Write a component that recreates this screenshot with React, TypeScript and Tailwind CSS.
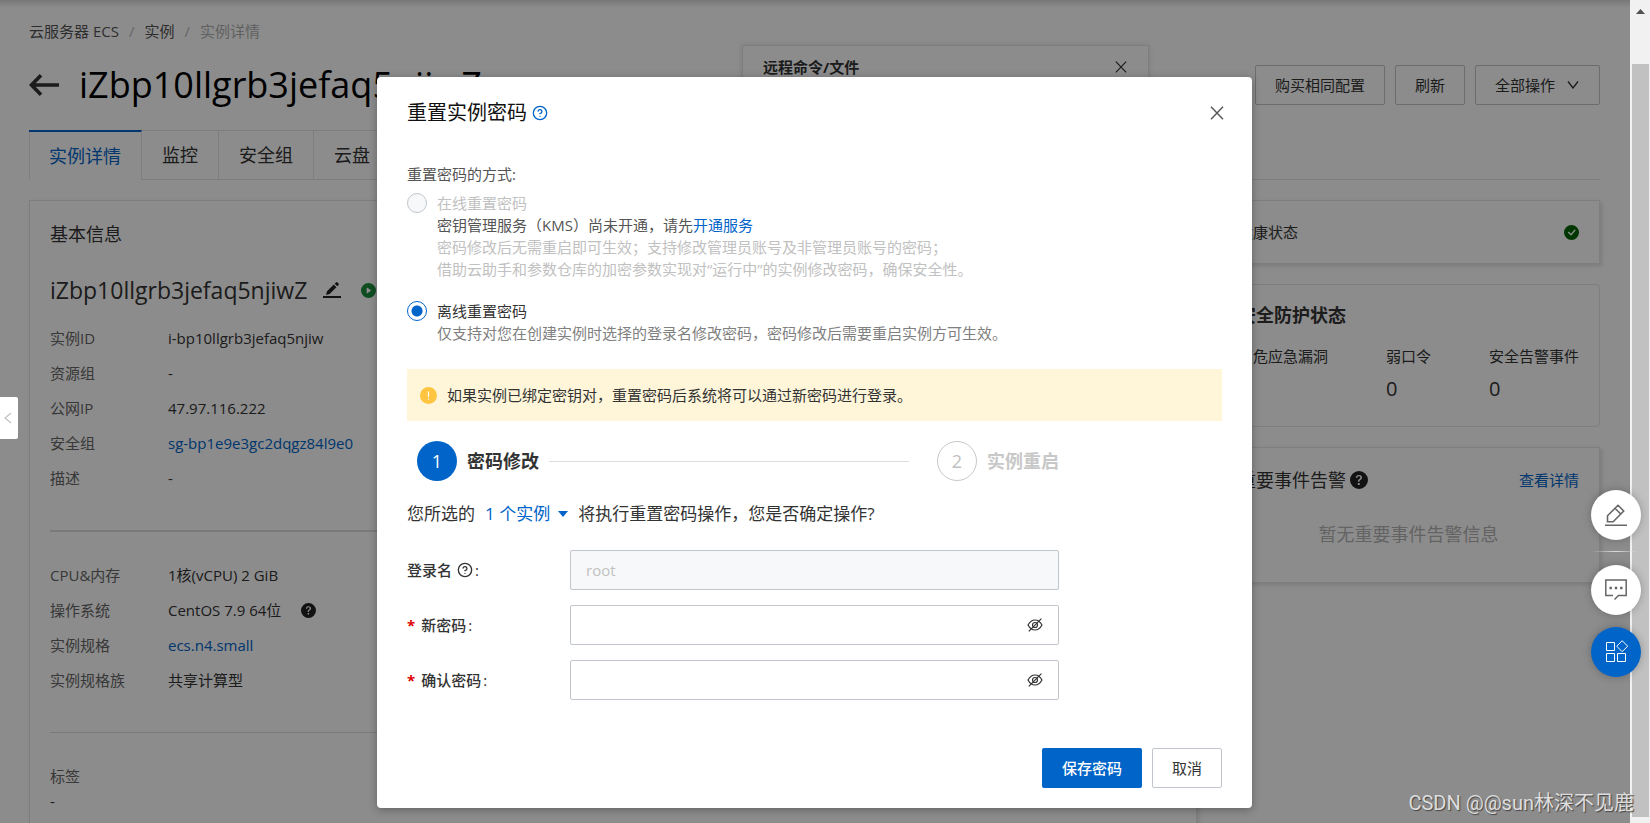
import { useState } from "react";
import type { ReactNode } from "react";
import clsx from "clsx";
import { CircleQuestionMark } from "lucide-react";
import { BsCheckCircleFill, BsPlayCircleFill, BsQuestionCircleFill } from "react-icons/bs";

const tabs = ["实例详情", "监控", "安全组", "云盘", "快照", "弹性网卡", "操作记录"];

const basicInfo = [
  { label: "实例ID", value: "i-bp10llgrb3jefaq5njiw" },
  { label: "资源组", value: "-" },
  { label: "公网IP", value: "47.97.116.222" },
  { label: "安全组", value: "sg-bp1e9e3gc2dqgz84l9e0", link: true },
  { label: "描述", value: "-" },
];

const configInfo = [
  { label: "CPU&内存", value: "1核(vCPU) 2 GiB" },
  { label: "操作系统", value: "CentOS 7.9 64位", help: true },
  { label: "实例规格", value: "ecs.n4.small", link: true },
  { label: "实例规格族", value: "共享计算型" },
];

const securityStats = [
  { label: "高危应急漏洞", value: "0" },
  { label: "弱口令", value: "0" },
  { label: "安全告警事件", value: "0" },
];

type InfoRow = { label: string; value: string; link?: boolean; help?: boolean };

function CloseIcon({ className }: { className?: string }) {
  return (
    <svg viewBox="0 0 14 14" fill="none" stroke="currentColor" strokeWidth="1.4" className={className}>
      <path d="M1 0.7 13 13.3M13 0.7 1 13.3" />
    </svg>
  );
}

function EyeOffIcon() {
  return (
    <svg viewBox="0 0 16 14" fill="none" stroke="currentColor" strokeWidth="1.2" className="h-[14px] w-4">
      <path d="M1 7C3 3.4 5.3 2 8 2s5 1.4 7 5c-2 3.6-4.3 5-7 5S3 10.6 1 7Z" />
      <circle cx="8" cy="7" r="2.5" />
      <path d="M1.8 13.3 14.4 0.7" />
    </svg>
  );
}

function InfoList({ rows }: { rows: InfoRow[] }) {
  return (
    <dl>
      {rows.map((row) => (
        <div key={row.label} className="flex h-[35px] items-center">
          <dt className="w-[118px] text-[#666]">{row.label}</dt>
          <dd className="flex items-center gap-5">
            {row.link ? (
              <a href="#" className="text-[#0064c8]">{row.value}</a>
            ) : (
              row.value
            )}
            {row.help && <BsQuestionCircleFill className="h-[15px] w-[15px] text-[#222]" />}
          </dd>
        </div>
      ))}
    </dl>
  );
}

function PageHeader() {
  return (
    <>
      <nav className="flex gap-[10px] leading-[22px]">
        <a href="#" className="text-[#555]">云服务器 ECS</a>
        <span className="text-[#bbb]">/</span>
        <a href="#" className="text-[#555]">实例</a>
        <span className="text-[#bbb]">/</span>
        <span className="text-[#b0b0b0]">实例详情</span>
      </nav>

      <div className="mt-[23px] flex h-10 items-center">
        <button type="button" aria-label="返回" className="mr-5">
          <svg viewBox="0 0 30 22" fill="none" stroke="#333" strokeWidth="3.6" className="h-[22px] w-[30px]">
            <path d="M30 11H3M12 1.3 2.5 11l9.5 9.7" />
          </svg>
        </button>
        <h1 className="text-4xl text-black">iZbp10llgrb3jefaq5njiwZ</h1>
        <div className="ml-auto flex gap-[10px]">
          <button type="button" className="h-10 rounded-xs border border-[#c0c6cc] px-[19px]">购买相同配置</button>
          <button type="button" className="h-10 rounded-xs border border-[#c0c6cc] px-[19px]">刷新</button>
          <button type="button" className="flex h-10 items-center gap-3 rounded-xs border border-[#c0c6cc] pr-5 pl-[19px]">
            全部操作
            <svg viewBox="0 0 12 8" fill="none" stroke="currentColor" strokeWidth="1.3" className="h-2 w-3">
              <path d="M1 0.5 6 7l5-6.5" />
            </svg>
          </button>
        </div>
      </div>

      <div role="tablist" className="mt-[25px] flex h-[50px] border-b border-[#e6e6e6] text-lg">
        {tabs.map((tab, i) => (
          <button
            key={tab}
            type="button"
            role="tab"
            aria-selected={i === 0}
            className={clsx(
              "-mb-px border-r border-[#e6e6e6] px-5",
              i === 0 ? "border-t-2 border-t-[#0064c8] bg-white text-[#0064c8] shadow-[inset_1px_0_0_#e6e6e6]" : "border-t border-b"
            )}
          >
            {tab}
          </button>
        ))}
      </div>
    </>
  );
}

function BasicInfoCard() {
  return (
    <section className="flex-1 border border-[#e6e6e6] bg-white px-5 pt-[19px] shadow-[2px_2px_4px_rgba(0,0,0,0.12)]">
      <h2 className="text-lg leading-7">基本信息</h2>
      <div className="mt-6 flex h-9 items-center">
        <span className="text-[23px]">iZbp10llgrb3jefaq5njiwZ</span>
        <button type="button" aria-label="编辑名称" className="ml-4">
          <svg viewBox="0 0 18 16" className="h-4 w-[18px]" fill="#222">
            <path d="M3 13 4 9.2 10.8 2.6 13.4 5.2 6.6 11.9ZM11.7 1.7 13.2 0.3Q13.7-0.1 14.2 0.3L15.7 1.7Q16.1 2.2 15.7 2.7L14.3 4.3Z" />
            <rect y="14" width="18" height="2" />
          </svg>
        </button>
        <BsPlayCircleFill className="ml-5 h-[15px] w-[15px] text-[#1e8e3e]" />
      </div>
      <div className="mt-[13px]">
        <InfoList rows={basicInfo} />
      </div>
      <hr className="mt-[34px] mb-[26px] border-t-2 border-[#dedede]" />
      <InfoList rows={configInfo} />
      <hr className="mt-[34px] mb-[31px] border-[#dedede]" />
      <p className="leading-[25px] text-[#666]">标签</p>
      <p className="h-24 leading-[25px]">-</p>
    </section>
  );
}

function StatusColumn() {
  return (
    <aside className="flex w-[383px] flex-col gap-5">
      <section className="flex h-16 items-center justify-between border border-[#e6e6e6] bg-white px-5 shadow-[2px_2px_4px_rgba(0,0,0,0.12)]">
        <span>健康状态</span>
        <BsCheckCircleFill className="h-[15px] w-[15px] text-[#006400]" />
      </section>

      <section className="h-[143px] rounded border border-[#e6e6e6] bg-white px-5 pt-4">
        <h2 className="text-lg leading-7 font-bold">安全防护状态</h2>
        <dl className="mt-4 flex justify-between">
          {securityStats.map((stat) => (
            <div key={stat.label}>
              <dt className="leading-[22px]">{stat.label}</dt>
              <dd className="mt-2 text-xl">{stat.value}</dd>
            </div>
          ))}
        </dl>
      </section>

      <section className="h-[136px] border border-[#e6e6e6] bg-white px-5 pt-[18px] shadow-[2px_2px_4px_rgba(0,0,0,0.12)]">
        <div className="flex items-center justify-between">
          <h2 className="flex items-center gap-1 text-lg leading-7">
            重要事件告警
            <BsQuestionCircleFill className="h-[18px] w-[18px] text-[#222]" />
          </h2>
          <a href="#" className="text-[#0064c8]">查看详情</a>
        </div>
        <p className="mt-[26px] text-center text-lg leading-7 text-[#b5b5b5]">暂无重要事件告警信息</p>
      </section>
    </aside>
  );
}

function StepItem({ index, title, active }: { index: number; title: string; active?: boolean }) {
  return (
    <div className="flex items-center gap-[10px] text-lg">
      <span
        className={clsx(
          "flex h-10 w-10 items-center justify-center rounded-full",
          active ? "bg-[#0064c8] text-white" : "border border-[#c8c8c8] text-[#c1c1c1]"
        )}
      >
        {index}
      </span>
      <span className={clsx("font-bold", active ? "text-[#333]" : "text-[#c8c8c8]")}>{title}</span>
    </div>
  );
}

function FieldRow({ id, label, children }: { id: string; label: ReactNode; children: ReactNode }) {
  return (
    <div className="flex items-center">
      <label htmlFor={id} className="flex w-1/4 items-center font-medium">{label}</label>
      <div className="relative w-3/4">{children}</div>
    </div>
  );
}

function PasswordField({ id, label }: { id: string; label: string }) {
  const [visible, setVisible] = useState(false);

  return (
    <FieldRow
      id={id}
      label={
        <>
          <span className="mr-[6px] font-bold text-[#d00]">*</span>
          {label}
          <span className="ml-[2px]">:</span>
        </>
      }
    >
      <input
        id={id}
        type={visible ? "text" : "password"}
        className="block h-10 w-full rounded-xs border border-[#c0c6cc] px-[15px] pr-10 outline-none"
      />
      <button
        type="button"
        aria-label="显示密码"
        onClick={() => setVisible(!visible)}
        className="absolute top-[13px] right-4"
      >
        <EyeOffIcon />
      </button>
    </FieldRow>
  );
}

const radioClass =
  "mt-px h-5 w-5 shrink-0 appearance-none rounded-full border border-[#c0c6cc] bg-white checked:border-[#0064c8] checked:bg-[radial-gradient(circle,#0064c8_5px,#fff_6px)] disabled:bg-[#f7f8fa]";

function ResetPasswordDialog() {
  return (
    <div
      role="dialog"
      aria-labelledby="dialog-title"
      className="w-[875px] rounded bg-white px-[30px] pb-5 shadow-[0_2px_8px_rgba(0,0,0,0.3)]"
    >
      <div className="flex items-center justify-between pt-[22px]">
        <h2 id="dialog-title" className="flex items-center gap-[5px] text-xl leading-7 text-[#111]">
          重置实例密码
          <CircleQuestionMark className="h-4 w-4 text-[#0064c8]" strokeWidth={2} />
        </h2>
        <button type="button" aria-label="关闭" className="-mr-0.5 text-[#555]">
          <CloseIcon className="h-[14px] w-[14px]" />
        </button>
      </div>

      <form onSubmit={(e) => e.preventDefault()}>
        <p className="mt-[36px] leading-[22px] text-[#555]">重置密码的方式:</p>
        <div className="mt-[7px] flex gap-[10px]">
          <input id="online" type="radio" name="mode" disabled className={radioClass} />
          <div className="leading-[22px] text-[#c1c1c1]">
            <label htmlFor="online">在线重置密码</label>
            <p className="text-[#555]">
              密钥管理服务（KMS）尚未开通，请先<a href="#" className="text-[#0064c8]">开通服务</a>
            </p>
            <p>密码修改后无需重启即可生效；支持修改管理员账号及非管理员账号的密码；</p>
            <p>借助云助手和参数仓库的加密参数实现对“运行中”的实例修改密码，确保安全性。</p>
          </div>
        </div>
        <div className="mt-5 flex gap-[10px]">
          <input id="offline" type="radio" name="mode" defaultChecked className={radioClass} />
          <div className="leading-[22px]">
            <label htmlFor="offline">离线重置密码</label>
            <p className="text-[#808080]">仅支持对您在创建实例时选择的登录名修改密码，密码修改后需要重启实例方可生效。</p>
          </div>
        </div>

        <div className="mt-[25px] flex h-[52px] items-center gap-[10px] bg-[#fff6da] px-[13px]">
          <svg viewBox="0 0 17 17" className="h-[17px] w-[17px]">
            <circle cx="8.5" cy="8.5" r="8.5" fill="#ffc440" />
            <path d="M8.5 4.5v5.5M8.5 11.5v1.3" stroke="#fff" strokeWidth="1.2" />
          </svg>
          如果实例已绑定密钥对，重置密码后系统将可以通过新密码进行登录。
        </div>

        <div className="w-4/5">
          <div className="mt-5 flex items-center pl-[10px]">
            <StepItem index={1} title="密码修改" active />
            <div className="mr-7 ml-[10px] h-px flex-1 bg-[#dedede]" />
            <StepItem index={2} title="实例重启" />
          </div>

          <p className="mt-[19px] flex items-center text-[17px] leading-7">
            您所选的
            <button type="button" className="mx-[10px] flex items-center gap-2 text-[#0064c8]">
              1 个实例
              <svg viewBox="0 0 10 6" className="h-[6px] w-[10px]" fill="currentColor">
                <path d="M0 0h10L5 6z" />
              </svg>
            </button>
            将执行重置密码操作，您是否确定操作?
          </p>

          <div className="mt-[22px] flex flex-col gap-[15px]">
            <FieldRow
              id="login"
              label={
                <>
                  登录名
                  <CircleQuestionMark className="ml-[5px] h-4 w-4" strokeWidth={2} />
                  <span className="ml-[2px]">:</span>
                </>
              }
            >
              <input
                id="login"
                type="text"
                value="root"
                disabled
                className="block h-10 w-full rounded-xs border border-[#c0c6cc] bg-[#f7f8fa] px-[15px] text-[#c1c1c1]"
              />
            </FieldRow>
            <PasswordField id="password" label="新密码" />
            <PasswordField id="confirm" label="确认密码" />
          </div>
        </div>

        <div className="mt-12 flex justify-end gap-[10px]">
          <button type="submit" className="h-10 rounded-xs bg-[#0064c8] px-5 font-medium text-white">保存密码</button>
          <button type="button" className="h-10 rounded-xs border border-[#c0c6cc] px-[19px]">取消</button>
        </div>
      </form>
    </div>
  );
}

function FloatingTools() {
  const circle = "flex h-[50px] w-[50px] items-center justify-center rounded-full shadow-[0_0_8px_rgba(0,0,0,0.25)]";

  return (
    <div className="absolute top-[490px] right-[9px] z-20 flex flex-col items-center text-[#666]">
      <button type="button" aria-label="评价" className={clsx(circle, "bg-white")}>
        <svg viewBox="0 0 24 24" fill="none" stroke="currentColor" strokeWidth="1.6" className="h-6 w-6">
          <path d="M3.5 18.8v-6L14 2.3l5.7 5.7L9.2 18.8ZM11 5.3l5.7 5.7M1 22.2h22" />
        </svg>
      </button>
      <div className="mt-[11px] mb-[13px] h-px w-12 bg-gradient-to-r from-transparent via-[#ddd] to-transparent" />
      <button type="button" aria-label="咨询" className={clsx(circle, "bg-white")}>
        <svg viewBox="0 0 24 24" fill="none" stroke="currentColor" strokeWidth="1.5" className="h-6 w-6">
          <path d="M9 17.5H1.8V2h20.4v15.5H14.5L10.5 21.5" />
          <path d="M5.5 10h2.4M10.8 10h2.4M16.100 10h2.4" strokeWidth="2.4" />
        </svg>
      </button>
      <button type="button" aria-label="应用" className={clsx(circle, "mt-3 bg-[#0064c8] text-white")}>
        <svg viewBox="0 0 24 24" fill="none" stroke="currentColor" strokeWidth="1" className="h-6 w-6">
          <path d="M2.5 2.5h8v8h-8zM2.5 13.5h8v8h-8zM13.5 13.5h8v8h-8zM18.2 0.7 23.7 6.2 18.2 11.7 12.7 6.2Z" />
        </svg>
      </button>
    </div>
  );
}

export default function App() {
  return (
    <div className="relative flex h-screen overflow-hidden bg-white font-['Open_Sans','Noto_Sans_CJK_SC',sans-serif] text-[15px] text-[#333]">
      <div className="relative flex-1 overflow-hidden">
        <main className="pt-5 pr-[30px] pl-[29px]">
          <PageHeader />
          <div className="mt-5 flex items-start gap-5">
            <BasicInfoCard />
            <StatusColumn />
          </div>
        </main>

        {/* Remote command popover */}
        <div className="absolute top-[45px] right-[481px] flex h-40 w-[407px] items-start justify-between border border-[#e6e6e6] bg-white px-5 pt-[10px] shadow-[0_0_6px_rgba(0,0,0,0.12)]">
          <span className="leading-[22px] font-bold">远程命令/文件</span>
          <button type="button" aria-label="关闭" className="mt-[5px]">
            <CloseIcon className="h-3 w-[14px]" />
          </button>
        </div>

        <div className="absolute inset-x-0 top-0 h-2 bg-gradient-to-b from-black/15 to-transparent" />

        <div className="absolute inset-0 flex items-start justify-center bg-black/45 pt-[77px] pr-px">
          <ResetPasswordDialog />
        </div>

        {/* Side menu handle */}
        <button
          type="button"
          aria-label="展开菜单"
          className="absolute top-[397px] left-0 flex h-[42px] w-[18px] items-center justify-center rounded-r-xs bg-white pr-[3px]"
        >
          <svg viewBox="0 0 8 12" fill="none" stroke="#c1c1c1" strokeWidth="1.2" className="h-3 w-2">
            <path d="M7 1 1 6l6 5" />
          </svg>
        </button>
      </div>

      {/* Scrollbar */}
      <div className="flex w-5 flex-col items-center bg-[#f1f1f1] pb-[6px]">
        <svg viewBox="0 0 9 5" className="mt-[9px] h-[5px] w-[9px]" fill="#505050">
          <path d="M4.5 0 9 5H0z" />
        </svg>
        <div className="mt-[50px] w-[17px] flex-1 bg-[#c1c1c1]" />
      </div>

      <FloatingTools />

      <div className="absolute right-4 bottom-[6px] z-30 font-[Roboto,'Noto_Sans_CJK_SC',sans-serif] text-xl text-[#ddd] [text-shadow:1px_1px_1px_#444]">
        CSDN @@sun林深不见鹿
      </div>
    </div>
  );
}
